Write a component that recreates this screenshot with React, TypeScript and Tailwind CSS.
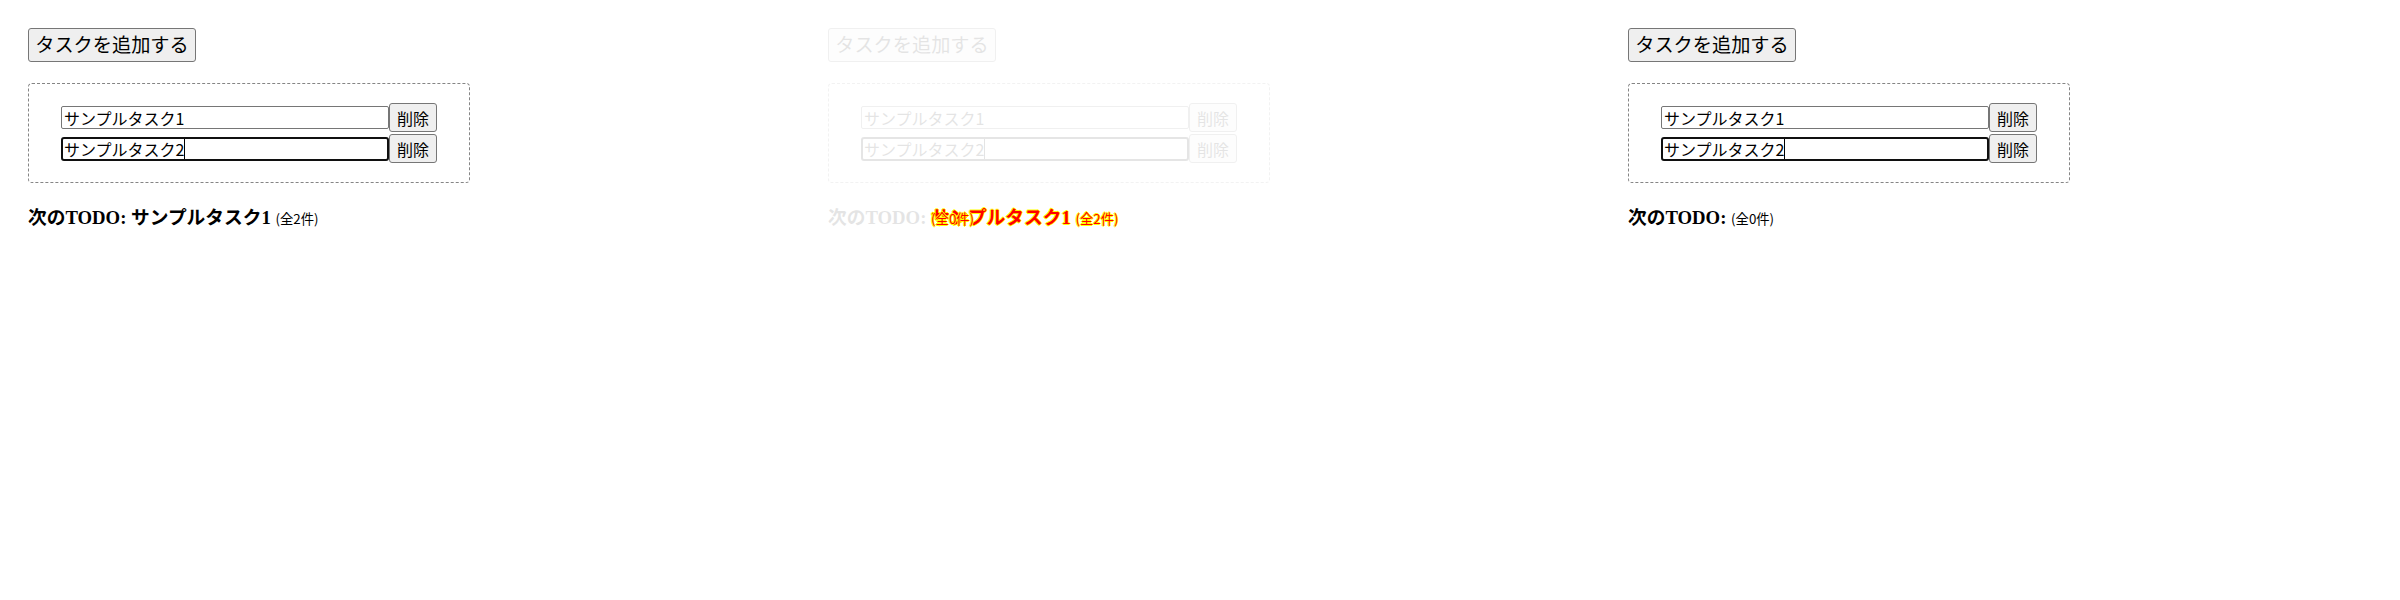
import React from "react";

type Mode = "expected" | "diff" | "actual";

const SANS = "font-['Noto_Sans_CJK_JP','Noto_Sans',sans-serif]";

function AddButton() {
  return (
    <div
      className={`${SANS} flex h-[34px] w-[168px] items-center justify-center rounded-[3px] border border-[#767676] bg-[#efefef] text-[19.2px] leading-none text-black`}
    >
      タスクを追加する
    </div>
  );
}

function DeleteButton() {
  return (
    <div
      className={`${SANS} flex h-[29px] w-[48px] shrink-0 items-center justify-center rounded-[3px] border border-[#767676] bg-[#efefef] text-[16px] leading-none text-black`}
    >
      削除
    </div>
  );
}

function TaskRow({ label, focused }: { label: string; focused?: boolean }) {
  return (
    <div className="flex items-center">
      {focused ? (
        <div
          className={`${SANS} flex h-[24px] w-[328px] items-center rounded-[3px] border-2 border-[#101010] bg-white pl-[1px] text-[16px] leading-none text-black`}
        >
          <span>{label}</span>
          <span className="inline-block h-[20px] w-px bg-black" />
        </div>
      ) : (
        <div
          className={`${SANS} flex h-[23px] w-[328px] items-center rounded-[2px] border border-[#767676] bg-white pl-[2px] text-[16px] leading-none text-black`}
        >
          {label}
        </div>
      )}
      <DeleteButton />
    </div>
  );
}

const SMALL = `${SANS} text-[13.33px] font-normal leading-none`;
const HEAD =
  "mt-[24px] whitespace-nowrap font-['Liberation_Serif','Noto_Sans_CJK_JP',serif] text-[18.72px] font-bold leading-[22px] text-black";
const DIFF_TEXT =
  "text-[#ff0000] [text-shadow:1px_0_0_#ffff00,-1px_0_0_#ffff00,0_1px_0_#ffff00,0_-1px_0_#ffff00]";

function Heading({ mode }: { mode: Mode }) {
  if (mode === "expected") {
    return (
      <div className={HEAD}>
        次のTODO: サンプルタスク1 <small className={SMALL}>(全2件)</small>
      </div>
    );
  }
  if (mode === "actual") {
    return (
      <div className={HEAD}>
        次のTODO: <small className={SMALL}>(全0件)</small>
      </div>
    );
  }
  return (
    <div className={HEAD}>
      <span className="opacity-10">次のTODO: </span>
      <span className={`relative ${DIFF_TEXT}`}>
        サンプルタスク1 <small className={SMALL}>(全2件)</small>
        <span className="absolute left-0 top-0 whitespace-nowrap leading-[22px]">
          <small className={SMALL}>(全0件)</small>
        </span>
      </span>
    </div>
  );
}

function Column({ mode }: { mode: Mode }) {
  return (
    <div className="w-[800px] shrink-0 pl-[28px] pt-[28px]">
      <div className={mode === "diff" ? "opacity-10" : ""}>
        <AddButton />
        <div className="mt-[21px] flex w-[442px] flex-col gap-[2px] rounded-[4px] border border-dashed border-[#858585] px-[32px] py-[19px]">
          <TaskRow label="サンプルタスク1" />
          <TaskRow label="サンプルタスク2" focused />
        </div>
      </div>
      <Heading mode={mode} />
    </div>
  );
}

export default function App() {
  return (
    <div className="flex h-[600px] w-[2400px] bg-white">
      <Column mode="expected" />
      <Column mode="diff" />
      <Column mode="actual" />
    </div>
  );
}
